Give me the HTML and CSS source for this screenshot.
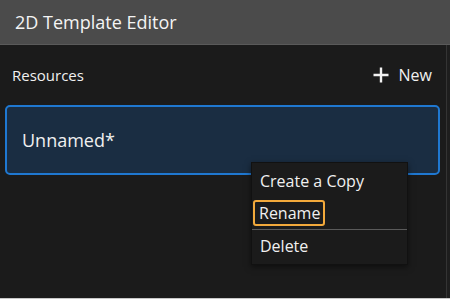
FILE: index.html
```html
<!DOCTYPE html>
<html lang="en">
<head>
    <meta charset="UTF-8">
    <title>2D Template Editor</title>
    <link rel="stylesheet" href="styles.css">
</head>
<body>
    <div class="window">
        <div class="titlebar">2D Template Editor</div>
        <div class="panel">
            <div class="content">
                <div class="resources-head">
                    <span class="label">Resources</span>
                    <button class="new-btn">
                        <svg width="16" height="16" viewBox="0 0 16 16">
                            <path d="M8 0.5V15.5M0.5 8H15.5" stroke="#f2f2f2" stroke-width="2.4" fill="none"/>
                        </svg>
                        <span>New</span>
                    </button>
                </div>
                <div class="card">Unnamed*</div>
                <ul class="menu">
                    <li class="menu-item">Create a Copy</li>
                    <li class="menu-item focused"><span>Rename</span></li>
                    <li class="menu-sep"></li>
                    <li class="menu-item last">Delete</li>
                </ul>
            </div>
            <div class="scrollbar"></div>
        </div>
    </div>
</body>
</html>
```

FILE: styles.css
```css
* {
    margin: 0;
    padding: 0;
    box-sizing: border-box;
}

body {
    font-family: 'Open Sans', 'Noto Sans', sans-serif;
    background: #1b1b1b;
    color: #f0f0f0;
    width: 450px;
    height: 299px;
    overflow: hidden;
}

.window {
    height: 299px;
    display: flex;
    flex-direction: column;
    border-bottom: 1px solid #c8c8c8;
}

.titlebar {
    height: 45px;
    background: #4b4b4b;
    border-bottom: 1px solid #5a5a5a;
    padding-left: 15px;
    font-size: 18px;
    line-height: 44px;
    color: #f4f4f4;
}

.panel {
    flex: 1;
    display: flex;
}

.content {
    flex: 1;
    position: relative;
    padding: 0 6px 0 5px;
}

.scrollbar {
    width: 4px;
    border-left: 1px solid #343434;
    background: #1e1e1e;
}

.resources-head {
    height: 60px;
    display: flex;
    align-items: center;
    justify-content: space-between;
    padding: 0 8px 0 7px;
}

.label {
    font-size: 15px;
}

.new-btn {
    display: flex;
    align-items: center;
    gap: 10px;
    background: none;
    border: none;
    color: #f0f0f0;
    font-family: inherit;
    font-size: 16px;
}

.card {
    height: 70px;
    background: #1a2d42;
    border: 2px solid #1f78d1;
    border-radius: 5px;
    padding-left: 15px;
    font-size: 18px;
    line-height: 66px;
}

.menu {
    position: absolute;
    left: 251px;
    top: 117px;
    width: 157px;
    list-style: none;
    background: #1b1b1b;
    border: 1px solid #111;
    box-shadow: 0 2px 6px rgba(0, 0, 0, 0.5);
    padding: 2px 1px 1px 1px;
    font-size: 16px;
}

.menu-item {
    height: 32px;
    line-height: 32px;
    padding-left: 7px;
}

.menu-item.last {
    height: 33px;
}

.menu-item.focused {
    padding-left: 0;
    display: flex;
    align-items: center;
}

.menu-item.focused span {
    border: 2px solid #f2a93b;
    border-radius: 3px;
    padding: 0 3px 0 4px;
    line-height: 22px;
}

.menu-sep {
    height: 1px;
    margin: 0 -1px;
    background: #5a5a5a;
}
```
